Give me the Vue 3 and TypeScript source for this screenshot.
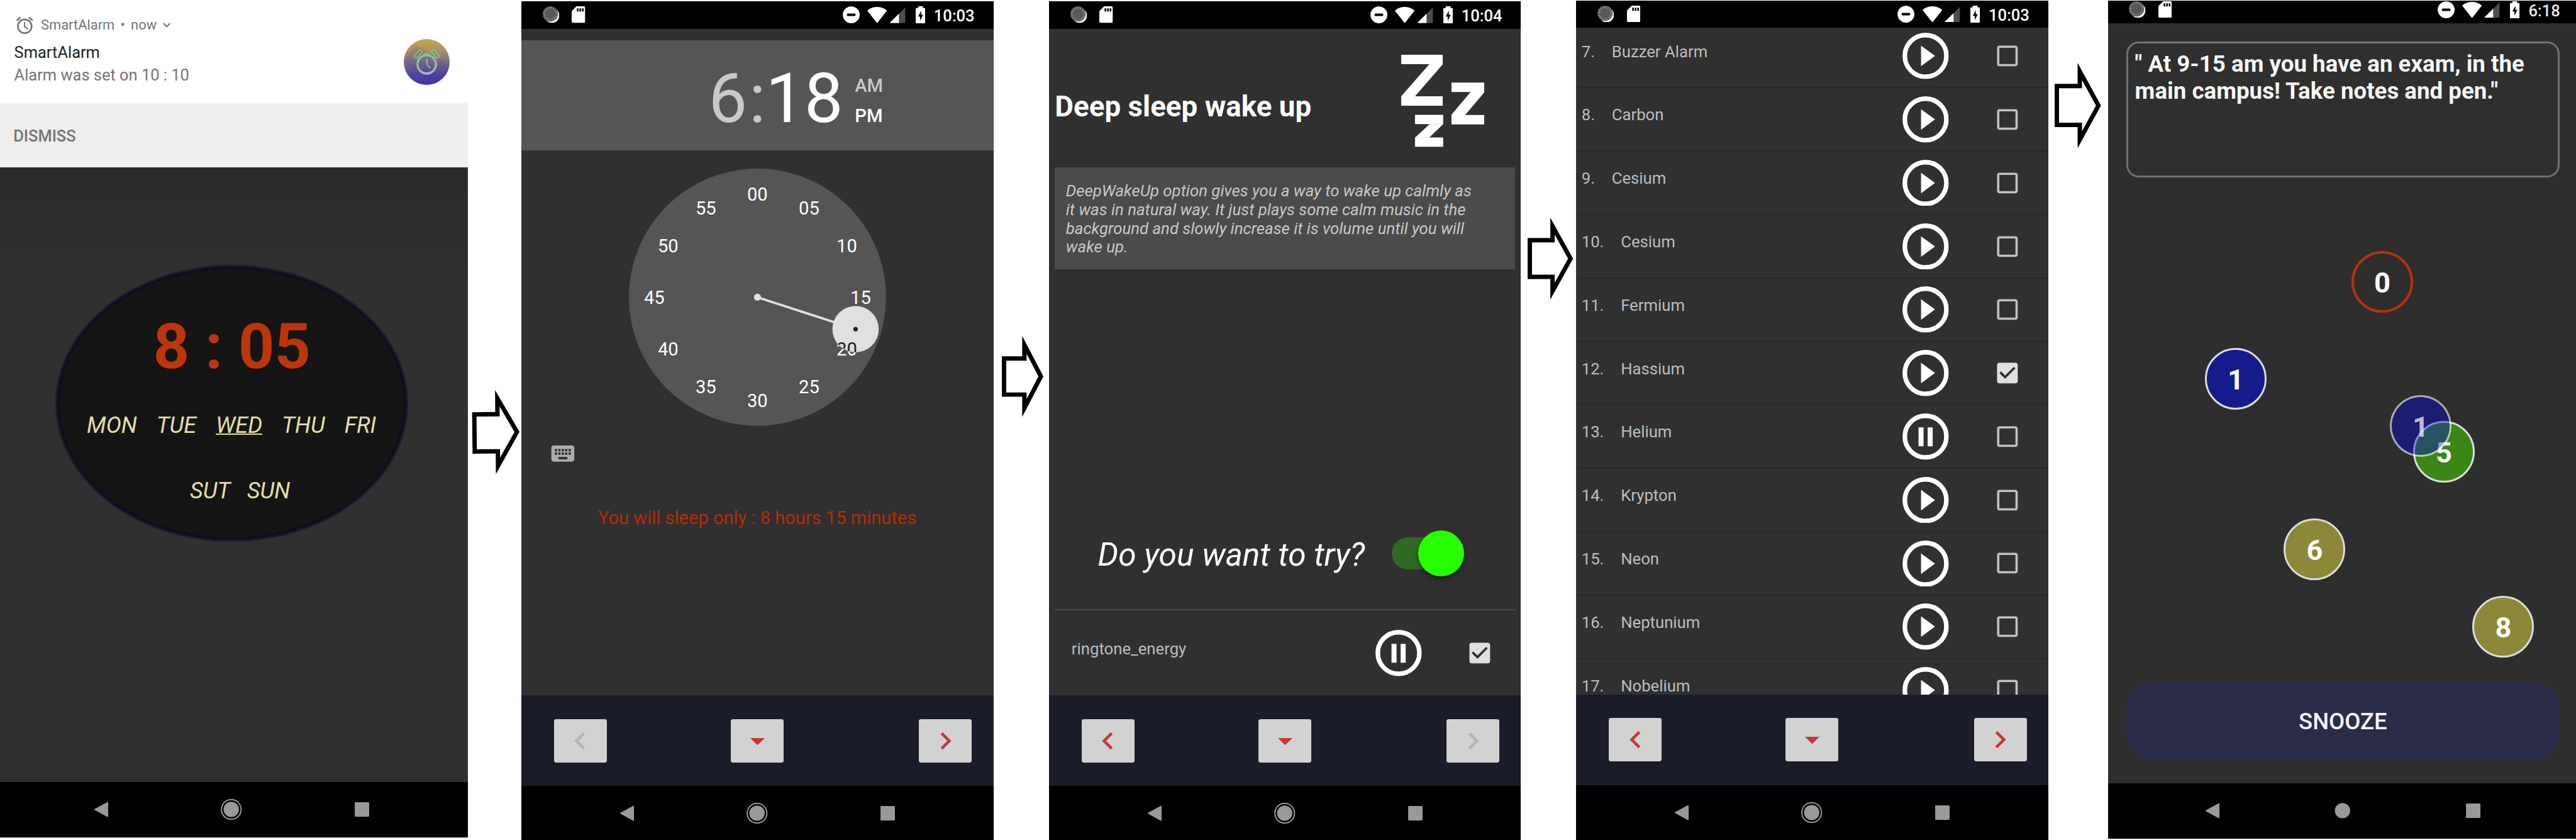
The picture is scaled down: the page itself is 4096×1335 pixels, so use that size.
<script setup lang="ts">
interface Sound {
  index: number
  name: string
  playing?: boolean
  checked?: boolean
}

interface Ball {
  label: string
  x: number
  y: number
  kind: string
}

interface Arrow {
  x: number
  y: number
  w: number
  h: number
  stem: number
  top: number
  bottom: number
  tilt?: number
}

const weekDays = ['MON', 'TUE', 'WED', 'THU', 'FRI']
const weekend = ['SUT', 'SUN']

const sounds: Sound[] = [
  { index: 7, name: 'Buzzer Alarm' },
  { index: 8, name: 'Carbon' },
  { index: 9, name: 'Cesium' },
  { index: 10, name: 'Cesium' },
  { index: 11, name: 'Fermium' },
  { index: 12, name: 'Hassium', checked: true },
  { index: 13, name: 'Helium', playing: true },
  { index: 14, name: 'Krypton' },
  { index: 15, name: 'Neon' },
  { index: 16, name: 'Neptunium' },
  { index: 17, name: 'Nobelium' },
]

const description = [
  'DeepWakeUp option gives you a way to wake up calmly as',
  'it was in natural way. It just plays some calm music in the',
  'background and slowly increase it is volume until you will',
  'wake up.',
]

const note = ['" At 9-15 am you have an exam, in the', 'main campus! Take notes and pen."']

const balls: Ball[] = [
  { label: '0', x: 627, y: 239, kind: 'ring' },
  { label: '1', x: 292, y: 461, kind: 'blue' },
  { label: '5', x: 768, y: 627.5, kind: 'green' },
  { label: '1', x: 715, y: 569, kind: 'ghost' },
  { label: '6', x: 472.5, y: 850.5, kind: 'olive' },
  { label: '8', x: 904, y: 1027, kind: 'olive' },
]

const dial = Array.from({ length: 12 }, (_, i) => {
  const angle = (i * Math.PI) / 6
  return {
    label: String(i * 5).padStart(2, '0'),
    x: 294 + 236 * Math.sin(angle),
    y: 294 - 236 * Math.cos(angle) + 15,
  }
})

const selected = {
  x: 294 + 236 * Math.sin((18 * Math.PI) / 30),
  y: 294 - 236 * Math.cos((18 * Math.PI) / 30),
}

const arrows: Arrow[] = [
  { x: 10, y: 892, w: 108, h: 192, stem: 53, top: 50, bottom: 145, tilt: -0.6 },
  { x: 20, y: 767.8, w: 95, h: 185, stem: 46.6, top: 46.5, bottom: 139 },
  { x: 15, y: 498.4, w: 104, h: 187, stem: 52, top: 46.5, bottom: 140.2 },
  { x: 14, y: 144, w: 106, h: 195, stem: 52.6, top: 48, bottom: 146.6 },
]

/** Hollow block arrow: an outer contour with the inner contour cut out of it. */
function arrowPath(a: Arrow): string {
  const t = 10
  const half = a.h / 2
  const inset = (t * Math.hypot(a.w - a.stem, half)) / half
  const tip = ((t + inset) * half) / (a.w - a.stem)
  const outer = `M0 ${a.top}H${a.stem}V0L${a.w} ${half}L${a.stem} ${a.h}V${a.bottom}H0Z`
  const inner = `M${t} ${a.top + t}H${a.stem + t}V${tip}L${a.w - inset} ${half}L${a.stem + t} ${a.h - tip}V${a.bottom - t}H${t}Z`
  return outer + inner
}

function rem(v: number): string {
  return `${v / 100}rem`
}

function arrowStyle(a: Arrow) {
  return {
    marginLeft: rem(a.x),
    marginTop: rem(a.y),
    width: rem(a.w),
    height: rem(a.h),
    transform: a.tilt ? `rotate(${a.tilt}deg)` : undefined,
  }
}
</script>

<template>
  <svg class="sprite" width="0" height="0" aria-hidden="true">
    <symbol id="sync" viewBox="0 0 38 38">
      <circle cx="21" cy="21" r="17" fill="#fff" />
      <circle cx="17.5" cy="17.5" r="17.5" fill="#585858" />
      <circle cx="17.5" cy="17.5" r="14" fill="none" stroke="#9a9a9a" stroke-width="5" stroke-dasharray="1.8 3.7" />
    </symbol>
    <symbol id="sd" viewBox="0 0 31 38">
      <path d="M11 0H27.5Q31 0 31 3.5V34.5Q31 38 27.5 38H3.500Q0 38 0 34.500V11Z" fill="#fff" />
      <path d="M12 4.500H15.700V12H12ZM17.800 4.500H21.500V12H17.800ZM23.600 4.500H27.300V12H23.600Z" fill="#000" />
    </symbol>
    <symbol id="dnd" viewBox="0 0 39 39">
      <circle cx="19.500" cy="19.500" r="19.300" fill="#fff" />
      <rect x="9.500" y="16.500" width="20" height="5.800" rx="2.500" fill="#000" />
    </symbol>
    <symbol id="wifi" viewBox="0 0 45 37">
      <path d="M22.500 37L0 8.500C12 -2.800 33 -2.800 45 8.500Z" fill="#fff" />
    </symbol>
    <symbol id="signal" viewBox="0 0 36 37">
      <path d="M35 1V37H1Z" fill="#4d4d4d" />
      <path d="M20.600 15.500V37H1Q-0.500 36.500 1 35Z" fill="#fff" />
    </symbol>
    <symbol id="battery" viewBox="0 0 22 39">
      <path d="M5.500 0H16.500V4H20Q22 4 22 6V37Q22 39 20 39H2Q0 39 0 37V6Q0 4 2 4H5.500Z" fill="#fff" />
      <path d="M12.500 10L5.500 23.500H10V33L17 19.500H12.500Z" fill="#000" />
    </symbol>
    <symbol id="nav" viewBox="0 0 1080 126">
      <path d="M255.500 45.500Q257.500 44.500 257.500 47V78Q257.500 80.500 255.500 79.500L227 64Q224.500 62.500 227 61Z" fill="#999" />
      <circle cx="539" cy="62.500" r="17.500" fill="#999" />
      <rect x="821.500" y="46" width="33" height="33" rx="2" fill="#999" />
    </symbol>
    <symbol id="prev" viewBox="0 0 24 24">
      <path d="M15.410 7.410L14 6l-6 6 6 6 1.410-1.410L10.830 12z" fill="currentColor" />
    </symbol>
    <symbol id="next" viewBox="0 0 24 24">
      <path d="M10 6L8.590 7.410 13.170 12l-4.580 4.590L10 18l6-6z" fill="currentColor" />
    </symbol>
    <symbol id="down" viewBox="0 0 24 24">
      <path d="M7 10l5 5 5-5z" fill="currentColor" />
    </symbol>
    <symbol id="play" viewBox="0 0 106 106">
      <circle cx="53" cy="53" r="47.600" fill="none" stroke="#fff" stroke-width="10.600" />
      <path d="M42.500 29.500V76.500L74.500 53Z" fill="#fff" />
    </symbol>
    <symbol id="pause" viewBox="0 0 106 106">
      <circle cx="53" cy="53" r="47.600" fill="none" stroke="#fff" stroke-width="10.600" />
      <path d="M36.800 32H48.300V75H36.800ZM57.700 32H69.200V75H57.700Z" fill="#fff" />
    </symbol>
    <symbol id="box" viewBox="0 0 24 24">
      <path d="M19 5v14H5V5h14m0-2H5c-1.100 0-2 .9-2 2v14c0 1.100.9 2 2 2h14c1.100 0 2-.9 2-2V5c0-1.100-.9-2-2-2z" fill="#c1c1c1" />
    </symbol>
    <symbol id="boxed" viewBox="0 0 24 24">
      <path d="M19 3H5c-1.110 0-2 .9-2 2v14c0 1.100.89 2 2 2h14c1.110 0 2-.9 2-2V5c0-1.100-.89-2-2-2zm-9 14l-5-5 1.410-1.410L10 14.170l7.590-7.590L19 8l-9 9z" fill="#e0e0e0" />
    </symbol>
  </svg>

  <main class="board">
    <!-- Alarm overview with notification -->
    <section class="phone overview">
      <div class="notice">
        <div class="notice-text">
          <div class="notice-app">
            <svg class="alarm" viewBox="0 0 24 24">
              <path
                d="M22 5.720l-4.600-3.860-1.290 1.530 4.600 3.860L22 5.720zM7.880 3.390L6.600 1.860 2 5.710l1.290 1.530 4.590-3.850zM12.500 8H11v6l4.750 2.850.75-1.230-4-2.370V8zM12 4c-4.970 0-9 4.030-9 9s4.020 9 9 9c4.970 0 9-4.030 9-9s-4.030-9-9-9zm0 16c-3.870 0-7-3.130-7-7s3.130-7 7-7 7 3.130 7 7-3.130 7-7 7z"
                fill="#757575"
              />
            </svg>
            <span>SmartAlarm • now</span>
            <svg class="expand" viewBox="0 0 18 11"><path d="M1.500 1.500L9 9L16.500 1.500" fill="none" stroke="#757575" stroke-width="3" /></svg>
          </div>
          <div class="notice-title">SmartAlarm</div>
          <div class="notice-body">Alarm was set on 10 : 10</div>
        </div>
        <svg class="badge" viewBox="0 0 105 105">
          <defs>
            <linearGradient id="badge-fill" x1="0" y1="0" x2="0" y2="1">
              <stop offset="0" stop-color="#c3aa50" />
              <stop offset="0.250" stop-color="#aa9065" />
              <stop offset="0.500" stop-color="#7f6c88" />
              <stop offset="0.780" stop-color="#50449e" />
              <stop offset="1" stop-color="#3d33ac" />
            </linearGradient>
            <clipPath id="badge-clip"><circle cx="52.500" cy="52.500" r="52.500" /></clipPath>
          </defs>
          <g clip-path="url(#badge-clip)">
            <rect width="105" height="105" fill="url(#badge-fill)" />
            <path d="M28 14L110 62V110H82L0 52Z" fill="#40308a" opacity="0.130" />
          </g>
          <g fill="none" stroke="#84c184">
            <circle cx="52.500" cy="58" r="21" stroke-width="5" stroke="#8dbf9c" />
            <path d="M38.500 73.500A21 21 0 0 0 66.500 73.500" stroke-width="5" stroke="#a7b3cd" />
            <path d="M44 36.500Q52.500 31 61 36.500" stroke-width="3.500" />
            <path d="M53 45V58L61 67" stroke-width="3" stroke="#8dbf9c" />
            <rect x="22" y="30" width="22" height="8" rx="4" stroke-width="2.800" transform="rotate(-48 33 34)" />
            <rect x="61" y="30" width="22" height="8" rx="4" stroke-width="2.800" transform="rotate(48 72 34)" />
          </g>
        </svg>
      </div>
      <div class="dismiss">DISMISS</div>
      <div class="overview-body">
        <div class="oval">
          <div class="oval-time">8 : 05</div>
          <div class="days">
            <span v-for="day in weekDays" :key="day" :class="{ active: day === 'WED' }">{{ day }}</span>
          </div>
          <div class="days weekend">
            <span v-for="day in weekend" :key="day">{{ day }}</span>
          </div>
        </div>
      </div>
      <div class="navbar">
        <svg class="nav" viewBox="0 0 1080 126">
          <use href="#nav" width="1080" height="126" />
          <circle cx="539" cy="62.500" r="22.500" fill="none" stroke="#999" stroke-width="2.800" />
        </svg>
      </div>
    </section>

    <svg class="arrow" :style="arrowStyle(arrows[0])" :viewBox="`0 0 ${arrows[0].w} ${arrows[0].h}`"><path :d="arrowPath(arrows[0])" fill-rule="evenodd" /></svg>

    <!-- Time picker -->
    <section class="phone picker">
      <div class="status">
        <svg class="i-sync"><use href="#sync" /></svg>
        <svg class="i-sd"><use href="#sd" /></svg>
        <svg class="i-dnd"><use href="#dnd" /></svg>
        <svg class="i-wifi"><use href="#wifi" /></svg>
        <svg class="i-signal"><use href="#signal" /></svg>
        <svg class="i-battery"><use href="#battery" /></svg>
        <span class="clock">10:03</span>
      </div>
      <div class="screen">
        <div class="picker-head">
          <span class="hour">6</span>
          <span class="colon">:</span>
          <div class="right">
            <span class="minute">18</span>
            <div class="ampm"><span class="dim">AM</span><span>PM</span></div>
          </div>
        </div>
        <svg class="dial" viewBox="0 0 588 588">
          <defs>
            <clipPath id="selector"><circle :cx="selected.x" :cy="selected.y" r="53" /></clipPath>
          </defs>
          <circle cx="294" cy="294" r="294" fill="#555" />
          <g fill="#fff">
            <text v-for="n in dial" :key="n.label" :x="n.x" :y="n.y">{{ n.label }}</text>
          </g>
          <line x1="294" y1="294" :x2="selected.x" :y2="selected.y" stroke="#e0e0e0" stroke-width="5.300" />
          <circle cx="294" cy="294" r="8" fill="#e0e0e0" />
          <circle :cx="selected.x" :cy="selected.y" r="53" fill="#e0e0e0" />
          <circle :cx="selected.x" :cy="selected.y" r="5.300" fill="#212121" />
          <g fill="#212121" clip-path="url(#selector)">
            <text :x="dial[4].x" :y="dial[4].y">{{ dial[4].label }}</text>
          </g>
        </svg>
        <svg class="keyboard" viewBox="0 0 24 24">
          <path
            d="M20 5H4c-1.100 0-1.990.9-1.990 2L2 17c0 1.100.9 2 2 2h16c1.100 0 2-.9 2-2V7c0-1.100-.9-2-2-2zm-9 3h2v2h-2V8zm0 3h2v2h-2v-2zM8 8h2v2H8V8zm0 3h2v2H8v-2zm-1 2H5v-2h2v2zm0-3H5V8h2v2zm9 7H8v-2h8v2zm0-4h-2v-2h2v2zm0-3h-2V8h2v2zm3 3h-2v-2h2v2zm0-3h-2V8h2v2z"
            fill="#acacac"
          />
        </svg>
        <div class="sleep-hint">You will sleep only : 8 hours 15 minutes</div>
      </div>
      <div class="toolbar">
        <div class="tool off"><svg><use href="#prev" /></svg></div>
        <div class="tool"><svg><use href="#down" /></svg></div>
        <div class="tool"><svg><use href="#next" /></svg></div>
      </div>
      <div class="navbar">
        <svg class="nav" viewBox="0 0 1080 126">
          <use href="#nav" width="1080" height="126" />
          <circle cx="539" cy="62.500" r="22.500" fill="none" stroke="#999" stroke-width="2.800" />
        </svg>
      </div>
    </section>

    <svg class="arrow" :style="arrowStyle(arrows[1])" :viewBox="`0 0 ${arrows[1].w} ${arrows[1].h}`"><path :d="arrowPath(arrows[1])" fill-rule="evenodd" /></svg>

    <!-- Deep sleep option -->
    <section class="phone deep">
      <div class="status">
        <svg class="i-sync"><use href="#sync" /></svg>
        <svg class="i-sd"><use href="#sd" /></svg>
        <svg class="i-dnd"><use href="#dnd" /></svg>
        <svg class="i-wifi"><use href="#wifi" /></svg>
        <svg class="i-signal"><use href="#signal" /></svg>
        <svg class="i-battery"><use href="#battery" /></svg>
        <span class="clock">10:04</span>
      </div>
      <div class="screen">
        <div class="deep-head">
          <h1>Deep sleep wake up</h1>
          <svg class="snore" viewBox="0 0 191 211" fill="none" stroke="#fff" stroke-width="21.500" stroke-linejoin="bevel">
            <path d="M0 10.750H95M0 105.750H95" />
            <path d="M115 74.500H191M115 148.500H191" />
            <path d="M31.500 148H96M31.500 199.750H96" />
            <g fill="#fff" stroke="none">
              <path d="M65 21H95V22L31 95.500V96H0V95L65 21Z" />
              <path d="M159 85H191L146 138H115V137Z" />
              <path d="M65 158.500H96L64 189.500H31.500Z" />
            </g>
          </svg>
        </div>
        <div class="about">
          <div v-for="line in description" :key="line">{{ line }}</div>
        </div>
        <div class="try">
          <span>Do you want to try?</span>
          <div class="switch"><i></i></div>
        </div>
        <div class="sound solo">
          <span class="sound-name">ringtone_energy</span>
          <svg class="i-play"><use href="#pause" /></svg>
          <svg class="i-check"><use href="#boxed" /></svg>
        </div>
      </div>
      <div class="toolbar">
        <div class="tool"><svg><use href="#prev" /></svg></div>
        <div class="tool"><svg><use href="#down" /></svg></div>
        <div class="tool off"><svg><use href="#next" /></svg></div>
      </div>
      <div class="navbar">
        <svg class="nav" viewBox="0 0 1080 126">
          <use href="#nav" width="1080" height="126" />
          <circle cx="539" cy="62.500" r="22.500" fill="none" stroke="#999" stroke-width="2.800" />
        </svg>
      </div>
    </section>

    <svg class="arrow" :style="arrowStyle(arrows[2])" :viewBox="`0 0 ${arrows[2].w} ${arrows[2].h}`"><path :d="arrowPath(arrows[2])" fill-rule="evenodd" /></svg>

    <!-- Ringtone list -->
    <section class="phone tones">
      <div class="status">
        <svg class="i-sync"><use href="#sync" /></svg>
        <svg class="i-sd"><use href="#sd" /></svg>
        <svg class="i-dnd"><use href="#dnd" /></svg>
        <svg class="i-wifi"><use href="#wifi" /></svg>
        <svg class="i-signal"><use href="#signal" /></svg>
        <svg class="i-battery"><use href="#battery" /></svg>
        <span class="clock">10:03</span>
      </div>
      <div class="screen">
        <div class="list">
          <div v-for="s in sounds" :key="s.index" class="sound">
            <span class="sound-name"><span class="sound-index">{{ s.index }}.</span>{{ s.name }}</span>
            <svg class="i-play"><use :href="s.playing ? '#pause' : '#play'" /></svg>
            <svg class="i-check"><use :href="s.checked ? '#boxed' : '#box'" /></svg>
          </div>
        </div>
      </div>
      <div class="toolbar">
        <div class="tool"><svg><use href="#prev" /></svg></div>
        <div class="tool"><svg><use href="#down" /></svg></div>
        <div class="tool"><svg><use href="#next" /></svg></div>
      </div>
      <div class="navbar">
        <svg class="nav" viewBox="0 0 1080 126">
          <use href="#nav" width="1080" height="126" />
          <circle cx="539" cy="62.500" r="22.500" fill="none" stroke="#999" stroke-width="2.800" />
        </svg>
      </div>
    </section>

    <svg class="arrow" :style="arrowStyle(arrows[3])" :viewBox="`0 0 ${arrows[3].w} ${arrows[3].h}`"><path :d="arrowPath(arrows[3])" fill-rule="evenodd" /></svg>

    <!-- Ringing alarm -->
    <section class="phone ringing">
      <div class="status">
        <svg class="i-sync"><use href="#sync" /></svg>
        <svg class="i-sd"><use href="#sd" /></svg>
        <svg class="i-dnd"><use href="#dnd" /></svg>
        <svg class="i-wifi"><use href="#wifi" /></svg>
        <svg class="i-signal"><use href="#signal" /></svg>
        <svg class="i-battery"><use href="#battery" /></svg>
        <span class="clock">6:18</span>
      </div>
      <div class="screen">
        <div class="note">
          <div v-for="line in note" :key="line">{{ line }}</div>
        </div>
        <div class="balls">
          <div v-for="(b, i) in balls" :key="i" class="ball" :class="b.kind" :style="{ left: rem(b.x), top: rem(b.y) }">{{ b.label }}</div>
        </div>
        <div class="snooze">SNOOZE</div>
      </div>
      <div class="navbar">
        <svg class="nav" viewBox="0 0 1080 126"><use href="#nav" width="1080" height="126" /></svg>
      </div>
    </section>
  </main>
</template>

<style>
html {
  font-size: calc(100vw / 58.92);
}
body {
  margin: 0;
  overflow: hidden;
  background: #fff;
}
</style>

<style scoped>
.sprite {
  position: absolute;
}
.board {
  display: flex;
  align-items: flex-start;
  width: 58.92rem;
  height: 19.2rem;
  overflow: hidden;
  background: #fff;
  font-family: Roboto, "Liberation Sans", sans-serif;
  color: #fff;
  white-space: nowrap;
}
.board svg {
  display: block;
  flex: none;
}
.arrow {
  fill: #000;
  overflow: visible;
}
.phone {
  display: flex;
  flex-direction: column;
  flex: none;
  width: 10.8rem;
  overflow: hidden;
  background: #303030;
}
.overview {
  width: 10.7rem;
  height: 19.14rem;
}
.picker {
  margin: 0.03rem 0 0 0.042rem;
  height: 19.17rem;
}
.deep {
  margin: 0.03rem 0 0 0.118rem;
  height: 19.17rem;
}
.tones {
  margin: 0.01rem 0 0 0.07rem;
  height: 19.19rem;
}
.ringing {
  width: 10.7rem;
  margin: 0.01rem 0 0 0.17rem;
  height: 19.17rem;
  background: #2e2e2e;
}
.screen {
  display: flex;
  flex-direction: column;
  flex: 1;
  min-height: 0;
  overflow: hidden;
}

/* status bar */
.status {
  display: flex;
  align-items: flex-start;
  flex: none;
  box-sizing: border-box;
  height: 0.63rem;
  padding: 0.12rem 0.43rem 0 0.49rem;
  background: #000;
}
.i-sync {
  width: 0.38rem;
  height: 0.38rem;
}
.i-sd {
  width: 0.31rem;
  height: 0.38rem;
  margin-left: 0.29rem;
}
.i-dnd {
  width: 0.39rem;
  height: 0.39rem;
  margin-left: auto;
}
.i-wifi {
  width: 0.45rem;
  height: 0.37rem;
  margin: 0.01rem 0 0 0.175rem;
}
.i-signal {
  width: 0.36rem;
  height: 0.37rem;
  margin: 0.01rem 0 0 0.06rem;
}
.i-battery {
  width: 0.22rem;
  height: 0.39rem;
  margin-left: 0.23rem;
}
.clock {
  margin: 0.025rem 0 0 0.2rem;
  font-size: 0.3675rem;
  line-height: 0.4rem;
  font-weight: 500;
}
.ringing .status {
  height: 0.52rem;
  padding: 0.02rem 0.36rem 0 0.48rem;
}
.ringing .clock {
  color: #e6e6e6;
}

/* navigation bar */
.navbar {
  flex: none;
  height: 1.23rem;
  overflow: hidden;
  background: #000;
}
.nav {
  width: 10.8rem;
  height: 1.26rem;
}
.overview .navbar {
  height: 1.26rem;
}
.overview .nav {
  margin-left: -0.1rem;
}
.tones .navbar {
  height: 1.25rem;
}
.ringing .navbar {
  height: 1.265rem;
}
.ringing .nav {
  margin: -0.005rem 0 0 -0.035rem;
}

/* bottom toolbar */
.toolbar {
  display: grid;
  grid-template-columns: 1fr auto 1fr;
  align-items: center;
  flex: none;
  height: 2.07rem;
  padding: 0;
  background: #1a1c2a;
}
.tool {
  display: flex;
  align-items: center;
  justify-content: center;
  width: 1.21rem;
  height: 0.99rem;
  border-radius: 0.05rem;
  background: #d2d2d2;
  color: #c93535;
}
.tool:first-child {
  margin-left: 0.75rem;
}
.tool:last-child {
  justify-self: end;
  margin-right: 0.49rem;
}
.tool svg {
  width: 0.79rem;
  height: 0.79rem;
}
.tool.off {
  color: #bab2b2;
}

/* overview */
.notice {
  display: flex;
  justify-content: space-between;
  box-sizing: border-box;
  height: 2.36rem;
  padding: 0.38rem 0.42rem 0 0.325rem;
  background: #fff;
}
.notice-app {
  display: flex;
  align-items: center;
  height: 0.4rem;
  margin-bottom: 0.156rem;
  font-size: 0.315rem;
  line-height: 0.4rem;
  word-spacing: 0.055rem;
  color: #757575;
}
.alarm {
  width: 0.47rem;
  height: 0.47rem;
  margin-right: 0.14rem;
}
.expand {
  width: 0.18rem;
  height: 0.11rem;
  margin-left: 0.14rem;
}
.notice-title,
.notice-body {
  font-size: 0.366rem;
  line-height: 0.52rem;
  color: #212121;
}
.notice-body {
  color: #757575;
}
.badge {
  width: 1.05rem;
  height: 1.05rem;
  margin-top: 0.51rem;
}
.dismiss {
  height: 1.47rem;
  padding-left: 0.305rem;
  background: #eee;
  color: #757575;
  font-size: 0.366rem;
  line-height: 1.5rem;
  font-weight: 500;
}
.overview-body {
  flex: 1;
  background: linear-gradient(#2a2a2a, #303030 2.6rem);
}
.oval {
  display: flex;
  flex-direction: column;
  align-items: center;
  box-sizing: border-box;
  width: 8.07rem;
  height: 6.33rem;
  margin: 2.23rem 0 0 1.27rem;
  padding-top: 1.106rem;
  border: 0.05rem solid #1a1c2a;
  border-radius: 50%;
  background: #151515;
  box-shadow: inset 0 0 0 0.05rem #0d0f20;
}
.oval-time {
  color: #bd350b;
  font-size: 1.44rem;
  line-height: 1.44rem;
  font-weight: 700;
}
.days {
  display: flex;
  gap: 0.445rem;
  margin-top: 0.77rem;
  margin-left: -0.02rem;
  color: #e3dea8;
  font-size: 0.52rem;
  line-height: 0.6rem;
  font-style: italic;
}
.days .active {
  text-decoration: underline;
  text-decoration-thickness: 0.025rem;
}
.weekend {
  gap: 0.38rem;
  margin: 0.894rem 0 0 0.37rem;
}

/* picker */
.picker-head {
  display: flex;
  box-sizing: border-box;
  height: 2.52rem;
  margin-top: 0.26rem;
  padding-top: 0.54rem;
  background: #555;
  font-size: 1.575rem;
  line-height: 1.6rem;
}
.hour {
  flex: 1;
  margin: 0 0.04rem 0 -0.04rem;
  text-align: right;
}
.hour,
.colon,
.dim {
  color: #c9c9c9;
}
.right {
  display: flex;
  flex: 1;
}
.ampm {
  display: flex;
  flex-direction: column;
  margin: 0.146rem 0 0 0.27rem;
  font-size: 0.42rem;
  line-height: 0.7rem;
  font-weight: 500;
}
.dial {
  align-self: center;
  width: 5.88rem;
  height: 5.88rem;
  margin-top: 0.417rem;
}
.dial text {
  font-size: 42px;
  text-anchor: middle;
}
.keyboard {
  width: 0.63rem;
  height: 0.63rem;
  margin: 0.32rem 0 0 0.64rem;
}
.sleep-hint {
  margin-top: 0.906rem;
  text-align: center;
  color: #b62c05;
  font-size: 0.418rem;
  line-height: 0.5rem;
}

/* deep sleep */
.deep-head {
  display: flex;
  justify-content: space-between;
  height: 3.17rem;
  padding: 0 0.835rem 0 0.14rem;
}
.deep-head h1 {
  margin: 1.396rem 0 0;
  font-size: 0.658rem;
  line-height: 0.78rem;
  font-weight: 700;
}
.snore {
  width: 1.91rem;
  height: 2.11rem;
  margin-top: 0.595rem;
}
.about {
  box-sizing: border-box;
  height: 2.32rem;
  margin: 0 0.13rem;
  padding: 0.325rem 0.26rem;
  background: #4b4b4b;
  color: #c8c8c8;
  font-size: 0.371rem;
  line-height: 0.43rem;
  font-style: italic;
}
.try {
  display: flex;
  align-items: center;
  height: 1.3rem;
  margin: auto 0 0.63rem 1.12rem;
}
.try span {
  width: 6.72rem;
  padding-top: 0.08rem;
  font-size: 0.74rem;
  line-height: 0.9rem;
  font-style: italic;
}
.switch {
  display: flex;
  align-items: center;
  justify-content: flex-end;
  width: 1.5rem;
  height: 0.74rem;
  border-radius: 0.37rem;
  background: #2e6923;
}
.switch i {
  flex: none;
  width: 1.05rem;
  height: 1.05rem;
  margin-right: -0.155rem;
  border-radius: 50%;
  background: #27ff00;
  box-shadow: 0 0.07rem 0.12rem rgba(0, 0, 0, 0.35);
}

/* sound rows */
.sound {
  display: flex;
  align-items: center;
  flex: none;
  box-sizing: border-box;
  height: 1.45rem;
  padding: 0 0.625rem 0 0.125rem;
  border-bottom: 0.03rem solid #292929;
}
.sound-name {
  flex: 1;
  padding-bottom: 0.185rem;
  color: #bdbdbd;
  font-size: 0.37rem;
  line-height: 0.43rem;
}
.sound-index {
  margin-right: 0.385rem;
}
.i-play {
  width: 1.06rem;
  height: 1.06rem;
}
.i-check {
  width: 0.63rem;
  height: 0.63rem;
  margin-left: 1.015rem;
}
.solo {
  height: 1.97rem;
  margin: 0 0.13rem;
  padding: 0 0.495rem 0 0.39rem;
  border-top: 0.03rem solid #4b4b4b;
  border-bottom: 0;
}
.list {
  margin-top: -0.07rem;
}

/* ringing */
.note {
  flex: none;
  box-sizing: border-box;
  width: 9.92rem;
  height: 3.1rem;
  margin: 0.425rem 0 0 0.41rem;
  padding: 0.155rem 0.16rem;
  border: 0.05rem solid #717171;
  border-radius: 0.28rem;
  background: #2f2f2f;
  color: #f7f7f7;
  font-size: 0.528rem;
  line-height: 0.62rem;
  font-weight: 700;
}
.balls {
  position: relative;
  flex: 1;
}
.ball {
  position: absolute;
  box-sizing: border-box;
  width: 1.41rem;
  height: 1.41rem;
  margin: -0.705rem 0 0 -0.705rem;
  border: 0.045rem solid #dcdcdc;
  border-radius: 50%;
  font-size: 0.65rem;
  line-height: 1.37rem;
  font-weight: 700;
  text-align: center;
}
.ring {
  border: 0.06rem solid #b8330a;
  line-height: 1.35rem;
}
.blue {
  background: #151b8c;
}
.green {
  background: #3c8615;
}
.ghost {
  border-color: rgba(255, 255, 255, 0.6);
  background: rgba(0, 0, 220, 0.38);
  background-clip: padding-box;
  color: rgba(255, 255, 255, 0.7);
}
.olive {
  background: #8d8837;
}
.snooze {
  flex: none;
  width: 9.92rem;
  height: 1.79rem;
  margin: 0 0 0.55rem 0.41rem;
  border-radius: 0.6rem;
  background: #2b2b4a;
  color: #f5f5f5;
  font-size: 0.525rem;
  line-height: 1.84rem;
  font-weight: 500;
  text-align: center;
}
</style>
